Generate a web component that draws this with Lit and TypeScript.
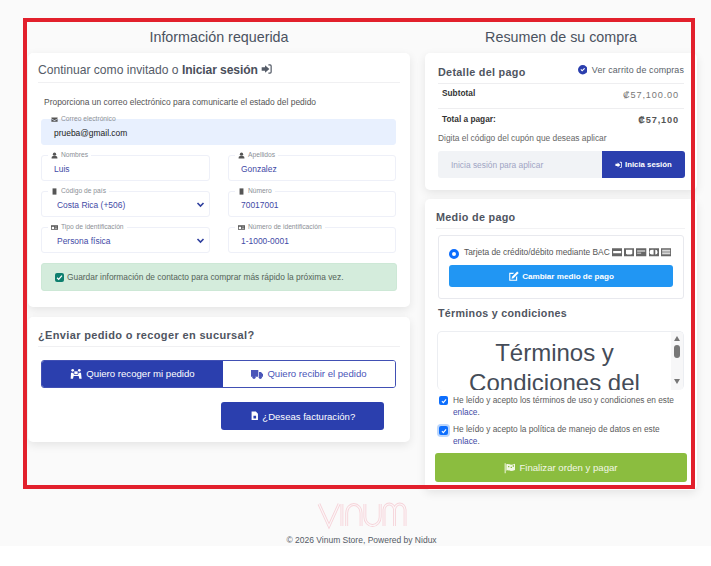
import { LitElement, html, css, svg } from "lit";
import { customElement } from "lit/decorators.js";

const signIn = svg`<path d="M6 3.500v3H1v5h5v3L12.500 9zM11 2h2.500A2.500 2.500 0 0 1 16 4.500v9a2.500 2.500 0 0 1-2.500 2.500H11v-1.800h2.500a.7.7 0 0 0 .7-.7v-9a.7.7 0 0 0-.7-.7H11z"/>`;
const icon = (p: unknown, cls = "", vb = "0 0 18 18") => html`<svg class="ic ${cls}" viewBox=${vb} fill="currentColor" aria-hidden="true">${p}</svg>`;
const envelope = svg`<path d="M1 4h16v2.200L9 11 1 6.200zM1 8l8 5 8-5v7H1z"/>`;
const user = svg`<circle cx="9" cy="5.500" r="4.200"/><path d="M1.500 17v-2.500A4 4 0 0 1 5.500 10.500h7a4 4 0 0 1 4 4V17z"/>`;
const mobile = svg`<path d="M4 1h10v16H4z"/>`;
const idCard = svg`<path fill-rule="evenodd" d="M0 3h18v12H0zM2 7v6h6V7zM10 7v1.500h6V7zM10 10v1.500h6V10z"/>`;
const chevron = svg`<path d="M3 6l6 6 6-6" fill="none" stroke="currentColor" stroke-width="3.200"/>`;
const carry = svg`<circle cx="4" cy="3.500" r="2"/><circle cx="14" cy="3.500" r="2"/><path d="M1.500 7h3.500l1 3h6l1-3h3.500l1 9h-3.500l-1-4H5.500l-1 4H1z"/><rect x="6.500" y="5" width="5" height="4"/>`;
const truck = svg`<path d="M0 3h11v10H0zM12 6h3l3 3.500V13h-6z"/><circle cx="4.500" cy="14" r="2.400"/><circle cx="14" cy="14" r="2.400"/>`;
const fileInv = svg`<path fill-rule="evenodd" d="M3 1h8l4 4v12H3zM6.500 9v5h5V9z"/>`;
const checkCircle = svg`<path fill-rule="evenodd" d="M9 0a9 9 0 1 1 0 18A9 9 0 0 1 9 0zM4.700 9.200l3.200 3.200 5.400-5.400-1.500-1.500-3.900 3.900-1.700-1.700z"/>`;
const edit = svg`<path d="M2 3h8L8.300 4.800H3.800v9.400h9.400V9.700L15 8v8H2z"/><path d="M15 .8L17.500 3.300 9 11.800l-3.200.7.700-3.200z"/>`;
const flag = svg`<path d="M1 2h1.500v15H1z"/><path fill-rule="evenodd" d="M3.500 3.500c3-1.500 5 .5 7 .5 2 0 4-.8 6-1.500V12c-2 .8-4 1.500-6 1.500-2 0-4-1.800-7-.5zM6 6v2h2V6zM10 7v2h2V7zM13 5v2h2V5z"/>`;
const ccs = [
  svg`<path fill-rule="evenodd" d="M0 2h18v14H0zM2 7v4h14V7z"/>`,
  svg`<path fill-rule="evenodd" d="M0 2h18v14H0zM3.500 5h11v7l-2 1h-7l-2-1z"/>`,
  svg`<path fill-rule="evenodd" d="M0 2h18v14H0zM2 6v2h14V6zM2 10v1.500h7V10z"/>`,
  svg`<path fill-rule="evenodd" d="M0 2h18v14H0zM5 5a4 4 0 1 0 0 8h3V5zM11 5v8a4 4 0 0 0 0-8z"/>`,
  svg`<path fill-rule="evenodd" d="M0 2h18v14H0zM2 5v1.500h14V5zM2 8v1.500h14V8zM2 11v1.500h14V11z"/>`,
];

const LOGO = [
  "M1 2 L11.500 24 L22 2",
  "M25 2V24",
  "M30 24V11a7.500 8.500 0 0 1 15 0V24",
  "M49 2V15a8 8.500 0 0 0 16 0V2",
  "M69 24V8a5.500 6 0 0 1 11 0V24M80 8a5.500 6 0 0 1 11 0V24",
];

@customElement("app-root")
export class AppRoot extends LitElement {
  static styles = css`
    :host { display: block; position: relative; width: 711px; height: 566px; overflow: hidden; background: #fff;
      font-family: "Liberation Sans", Arial, sans-serif; color: #495057; }
    * { box-sizing: border-box; }
    .ic { display: inline-block; width: 1em; height: 1em; vertical-align: -0.12em; flex: none; }
    .page { height: 546px; background: #fafafa; padding: 27px 0 0 28px; overflow: hidden; display: flex; flex-direction: column; }
    .cols { display: grid; grid-template-columns: 382px 272px; column-gap: 15px; height: 472px; align-items: start; }
    .col { display: flex; flex-direction: column; }
    h2.page-title { margin: 0 0 5px; height: 21px; line-height: 21px; font-size: 14.300px; font-weight: 400; text-align: center; color: #4a5260; }
    .card { background: #fff; border-radius: 5px; box-shadow: 0 3px 10px rgba(0,0,0,.09); }
    .c1 { height: 254px; padding: 9px 13px 0; margin-bottom: 10px; }
    .c2 { height: 125px; padding: 10px 13px 0 10px; }
    .head { margin: 0 -3px 0 -3px; height: 21px; line-height: 16px; font-size: 12.100px; font-weight: 400; color: #555c68; border-bottom: 1px solid #f0f0f2; }
    .head b { color: #4a4f5b; letter-spacing: -.1px; }
    .c2 .head { font-weight: 700; font-size: 11px; letter-spacing: .35px; height: 20px; margin: 0 -3px 0 0; color: #4f5561; }
    .intro { margin: 13px 0 0 3px; height: 12px; line-height: 12px; font-size: 8.450px; color: #555; }
    .form { margin-top: 11px; display: grid; grid-template-columns: 169px 168px; column-gap: 18px; row-gap: 10px; }
    .field { position: relative; height: 26px; border: 1px solid #eef0f8; border-radius: 3px; padding: 1px 0 0 12px; display: flex; align-items: center; justify-content: space-between;
      font-size: 8.450px; color: #3f4aa6; }
    .field.sel { padding-left: 15px; }
    .field.mail { grid-column: 1 / -1; background: #e8f0fe; border-color: #e8f0fe; color: #222; }
    .field label { position: absolute; left: 6px; top: -5px; background: #fff; padding: 0 3px; font-size: 6.700px; line-height: 8px; color: #8b8f96; white-space: nowrap; display: flex; gap: 3px; align-items: center; }
    .field.mail label { background: linear-gradient(#fff 50%, #e8f0fe 50%); }
    .field label .ic { color: #555; font-size: 7px; }
    .chev { font-size: 9px; color: #2f3f9e; margin-right: 4px; }
    .alert { margin: 10px 0 0; width: 356px; height: 28px; background: #d4ecdc; border: 1px solid #cde8d6; border-radius: 3px; padding-left: 13px; display: flex; align-items: center; gap: 2px; font-size: 8.400px; color: #55645a; white-space: nowrap; }
    .box { width: 9px; height: 9px; border-radius: 2px; background: #0d7f6e; display: inline-flex; align-items: center; justify-content: center; flex: none; margin-right: 1px; }
    .box svg { width: 7px; height: 7px; }
    .toggle { display: flex; margin: 13px 0 0 3px; width: 355px; height: 28px; border: 1px solid #4150b4; border-radius: 3px; overflow: hidden; font-size: 9.600px; }
    .toggle div { display: flex; align-items: center; justify-content: center; gap: 4px; }
    .t-on { width: 181px; background: #2b3fae; color: #fff; padding-bottom: 1px; }
    .t-off { flex: 1; color: #4a55b8; background: #fff; padding-bottom: 1px; }
    .toggle .ic { font-size: 12px; }
    .fact { margin: 14px 0 0 183px; width: 163px; height: 28px; background: #2b3fae; color: #fff; border-radius: 3px; font-size: 9.550px; display: flex; align-items: center; justify-content: center; gap: 3px; }
    .r1 { height: 137px; padding: 9px 13px 0 13px; margin-bottom: 9px; }
    .r-head { display: flex; justify-content: space-between; height: 22px; border-bottom: 1px solid #eeeef0; }
    .r-head b { font-size: 10.800px; line-height: 20px; letter-spacing: .3px; color: #4f5561; }
    .r-head span { font-size: 8.900px; line-height: 16px; color: #5a5f6a; letter-spacing: .13px; white-space: nowrap; }
    .r-head .ic { color: #2b3fae; font-size: 9.500px; margin-right: 2px; vertical-align: -1.500px; }
    .row { display: flex; justify-content: space-between; height: 25px; padding: 4px 5px 0 4px; border-bottom: 1px solid #eeeef0; font-size: 8.300px; color: #333; font-weight: 700; }
    .row.total { border: 0; height: 23px; padding: 5px 5px 0 4px; }
    .row i { font-style: normal; font-size: 9.200px; color: #777; font-weight: 400; letter-spacing: .85px; padding-top: 2px; }
    .row.total i { color: #555; font-weight: 700; padding-top: 1px; }
    .hint { font-size: 8.400px; color: #666; height: 12px; line-height: 12px; }
    .coupon { margin-top: 7px; display: flex; width: 247px; height: 27px; border-radius: 3px; overflow: hidden; }
    .coupon .in { width: 164px; background: #f1f3f6; color: #a0a5c4; font-size: 8.400px; display: flex; align-items: center; padding-left: 13px; }
    .coupon .btn { flex: 1; background: #2b3fae; color: #fff; font-size: 7.800px; font-weight: 700; display: flex; align-items: center; justify-content: center; gap: 2px; }
    .r2 { height: 291px; padding: 9px 0 0 11px; }
    .r2 h3 { margin: 0; font-size: 10.800px; letter-spacing: .3px; line-height: 18px; color: #4f5561; font-weight: 700; }
    .r2 .h1 { height: 21px; border-bottom: 1px solid #f2f2f4; margin-right: 12px; }
    .pay { margin: 6px 0 0 2px; width: 246px; height: 64px; border: 1px solid #e8e9ee; border-radius: 3px; padding: 9px 10px 0; }
    .pay-l { display: flex; align-items: center; height: 14px; font-size: 8.400px; color: #555; white-space: nowrap; }
    .radio { width: 10px; height: 10px; border-radius: 50%; border: 3px solid #0d6efd; background: #fff; margin-right: 5px; margin-top: 3px; flex: none; }
    .ccs { display: flex; gap: 2px; margin-left: 2px; font-size: 10.300px; color: #666; }
    .change { margin-top: 6px; height: 22px; background: #2196f3; border-radius: 3px; color: #fff; font-weight: 700; font-size: 8.100px; display: flex; align-items: center; justify-content: center; gap: 3px; }
    .change .ic { font-size: 11px; }
    .r2 .h2 { margin: 5px 0 0 2px; height: 18px; font-size: 10.700px; }
    .terms { margin: 9px 0 0 1px; width: 247px; height: 59px; border: 1px solid #eceef2; border-bottom: 0; border-radius: 5px; overflow: hidden; display: flex; }
    .terms .tx { flex: 1; text-align: center; font-size: 24px; line-height: 30px; color: #454c58; padding-top: 6px; }
    .bar { width: 12px; background: #f7f7f8; flex: none; display: flex; flex-direction: column; align-items: center; }
    .up { width: 0; height: 0; border: 3.500px solid transparent; border-top: 0; border-bottom: 5px solid #777; margin-top: 4px; }
    .thumb { width: 6px; height: 13px; background: #777; border-radius: 3px; margin-top: 4px; }
    .dn { width: 0; height: 0; border: 3.500px solid transparent; border-bottom: 0; border-top: 5px solid #777; margin-top: 21px; }
    .acc { margin: 0 0 0 3px; display: grid; grid-template-columns: 14px 1fr; width: 242px; font-size: 8.300px; line-height: 12px; color: #5b5b5b; }
    .acc a { color: #3f4aa6; }
    .acc1 { margin-top: 4px; }
    .acc2 { margin-top: 5px; }
    .chk { width: 9px; height: 9px; border-radius: 2px; background: #0d6efd; margin-top: 2px; display: flex; align-items: center; justify-content: center; }
    .chk svg { width: 6px; height: 6px; }
    .acc2 .chk { box-shadow: 0 0 0 2px #bcd6fb; margin-top: 3px; }
    .pay-go { margin: 6px 0 0 -1px; width: 252px; height: 29px; background: #8bbd3f; border-radius: 3px; color: #f2f7e6; font-size: 9.600px; display: flex; align-items: center; justify-content: center; gap: 3px; }
    .pay-go .ic { font-size: 12px; }
    footer { height: 47px; display: flex; flex-direction: column; align-items: center; margin-right: 16px; }
    footer svg { width: 88px; height: 26px; margin-top: 3px; overflow: visible; }
    footer p { margin: 6px 0 0; font-size: 8.500px; line-height: 12px; color: #555b66; }
    .frame { position: absolute; left: 23px; top: 18px; width: 672px; height: 471px; border: 4px solid #e2202c; pointer-events: none; }
  `;

  private field(label: string, ic: unknown, value: string, extra = "") {
    return html`<div class="field ${extra}"><label>${icon(ic)}${label}</label><span>${value}</span>${extra === "sel" ? icon(chevron, "chev") : ""}</div>`;
  }

  render() {
    const tick = svg`<path d="M2 7l3 3 6-7" fill="none" stroke="#fff" stroke-width="2.400"/>`;
    return html`
      <div class="page">
        <div class="cols">
          <div class="col">
            <h2 class="page-title">Información requerida</h2>
            <section class="card c1">
              <h3 class="head">Continuar como invitado o <b>Iniciar sesión</b> ${icon(signIn)}</h3>
              <p class="intro">Proporciona un correo electrónico para comunicarte el estado del pedido</p>
              <div class="form">
                ${this.field("Correo electrónico", envelope, "prueba@gmail.com", "mail")}
                ${this.field("Nombres", user, "Luis")}
                ${this.field("Apellidos", user, "Gonzalez")}
                ${this.field("Código de país", mobile, "Costa Rica (+506)", "sel")}
                ${this.field("Número", mobile, "70017001")}
                ${this.field("Tipo de identificación", idCard, "Persona física", "sel")}
                ${this.field("Número de identificación", idCard, "1-1000-0001")}
              </div>
              <div class="alert"><span class="box"><svg viewBox="0 0 13 13">${tick}</svg></span> Guardar información de contacto para comprar más rápido la próxima vez.</div>
            </section>
            <section class="card c2">
              <h3 class="head">¿Enviar pedido o recoger en sucursal?</h3>
              <div class="toggle">
                <div class="t-on">${icon(carry)} Quiero recoger mi pedido</div>
                <div class="t-off">${icon(truck)} Quiero recibir el pedido</div>
              </div>
              <div class="fact">${icon(fileInv)} ¿Deseas facturación?</div>
            </section>
          </div>
          <div class="col">
            <h2 class="page-title">Resumen de su compra</h2>
            <section class="card r1">
              <div class="r-head"><b>Detalle del pago</b><span>${icon(checkCircle)} Ver carrito de compras</span></div>
              <div class="row"><span>Subtotal</span><i>₡57,100.00</i></div>
              <div class="row total"><span>Total a pagar:</span><i>₡57,100</i></div>
              <div class="hint">Digita el código del cupón que deseas aplicar</div>
              <div class="coupon"><div class="in">Inicia sesión para aplicar</div><div class="btn">${icon(signIn)} Inicia sesión</div></div>
            </section>
            <section class="card r2">
              <h3 class="h1">Medio de pago</h3>
              <div class="pay">
                <div class="pay-l"><span class="radio"></span>Tarjeta de crédito/débito mediante BAC <span class="ccs">${ccs.map((c) => icon(c))}</span></div>
                <div class="change">${icon(edit)} Cambiar medio de pago</div>
              </div>
              <h3 class="h2">Términos y condiciones</h3>
              <div class="terms">
                <div class="tx">Términos y Condiciones del</div>
                <div class="bar"><span class="up"></span><span class="thumb"></span><span class="dn"></span></div>
              </div>
              <div class="acc acc1"><span class="chk"><svg viewBox="0 0 13 13">${tick}</svg></span><span>He leído y acepto los términos de uso y condiciones en este<br /><a>enlace</a>.</span></div>
              <div class="acc acc2"><span class="chk"><svg viewBox="0 0 13 13">${tick}</svg></span><span>He leído y acepto la política de manejo de datos en este<br /><a>enlace</a>.</span></div>
              <div class="pay-go">${icon(flag)} Finalizar orden y pagar</div>
            </section>
          </div>
        </div>
        <footer>
          <svg viewBox="0 0 92 26" preserveAspectRatio="none" fill="none" aria-label="Vinum">
            ${LOGO.map((d) => svg`<path d=${d} stroke="#f6d3d9" stroke-width="3"/>`)}
            ${LOGO.map((d) => svg`<path d=${d} stroke="#fbf7f8" stroke-width="1.200"/>`)}
          </svg>
          <p>© 2026 Vinum Store, Powered by Nidux</p>
        </footer>
      </div>
      <div class="frame"></div>
    `;
  }
}
